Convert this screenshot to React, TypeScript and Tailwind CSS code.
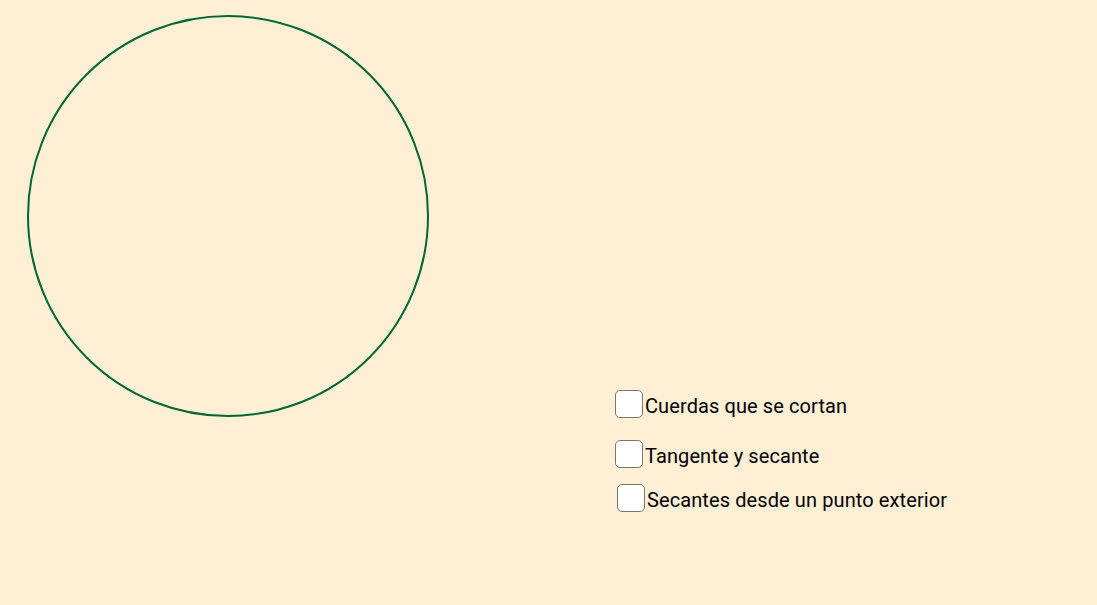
import React from 'react';

const options = [
  { label: 'Cuerdas que se cortan', top: 390, left: 615 },
  { label: 'Tangente y secante', top: 440, left: 615 },
  { label: 'Secantes desde un punto exterior', top: 484, left: 617 },
];

const App: React.FC = () => {
  return (
    <div className="relative w-[1097px] h-[605px] overflow-hidden bg-[#FFEFD5]" style={{ fontFamily: 'Roboto, "Liberation Sans", sans-serif' }}>
      {/* circunferencia */}
      <svg className="absolute left-0 top-0" width="1097" height="605" viewBox="0 0 1097 605">
        <circle cx="228" cy="216" r="200" fill="none" stroke="#006633" strokeWidth="2" />
      </svg>

      {options.map((o) => (
        <label
          key={o.label}
          className="absolute flex items-start gap-[2px] cursor-pointer"
          style={{ top: o.top, left: o.left }}
        >
          <span className="block w-[28px] h-[28px] rounded-[5px] border-[1.5px] border-[#7d7670] bg-white" />
          <span className="text-[20px] leading-[28px] mt-[2px] tracking-[0.1px] text-black">{o.label}</span>
        </label>
      ))}
    </div>
  );
};

export default App;
